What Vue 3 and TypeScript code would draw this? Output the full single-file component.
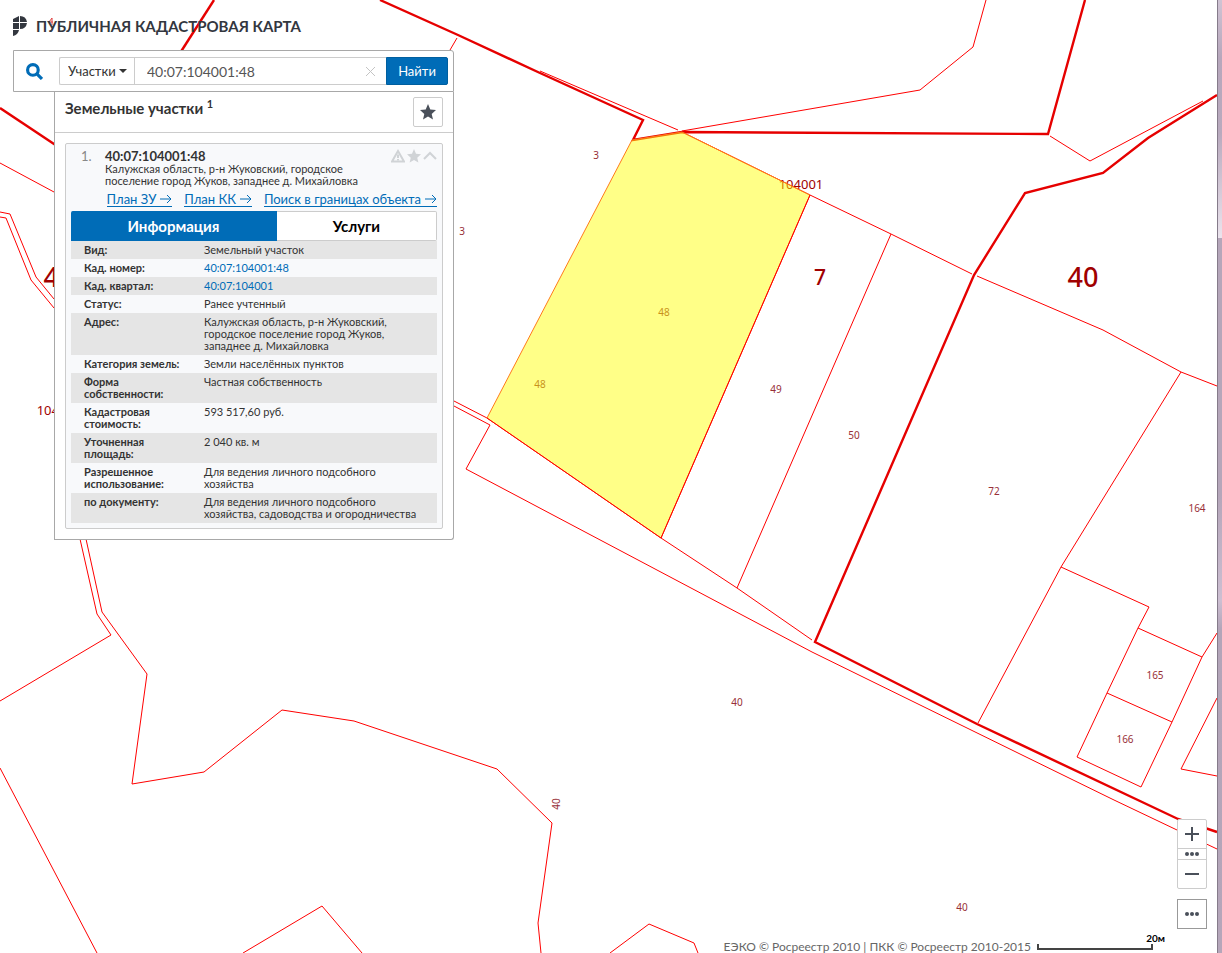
<script setup lang="ts">
import { ref } from 'vue'

interface Label { text: string; x: number; y: number; kind: 'parcel' | 'block' | 'district' | 'area'; turned?: boolean }
interface Row { name: string; value: string; link?: boolean }

const thick: string[] = [
  '214,0 182,50 150,100',
  '380,0 458,35 540,73 643,120 633,140 682,132 1048,134 1085,0',
  '1217,95 1148,138 1103,173 1025,193 974,275 815,642 977,724 1178,819 1217,832',
  '0,108 54,144 90,168',
]

const thin: string[] = [
  '457,38 450,50',
  '540,71 678,130',
  '682,131 920,90 973,47 986,0',
  '1050,136 1090,161 1203,101',
  '0,163 54,192',
  '0,212 10,214 36,277 54,299',
  '0,217 6,218 31,280 54,308',
  '682,132 810,195 891,234 972,274',
  '977,276 1103,330 1181,372 1217,386',
  '810,195 661,538',
  '891,234 737,588',
  '1181,372 1061,567 978,723',
  '1061,567 1149,607 1138,628 1202,657 1217,633',
  '1138,628 1107,693 1077,757 1141,787 1172,722 1202,657',
  '1107,693 1172,722',
  '1217,698 1181,769 1217,776',
  '454,401 487,418 661,538 737,588 812,640',
  '454,406 490,425 466,469 812,652 1020,754 1114,800 1177,830 1217,849',
  '80,539 97,614 111,635 0,701',
  '86,539 102,612 147,674 132,784 204,772 282,710 354,721 497,769 552,823 538,923 541,953',
  '0,768 97,953',
  '243,953 322,906 362,953',
  '610,953 649,924 694,943 698,953',
]

const labels: Label[] = [
  { text: '3', x: 596, y: 159, kind: 'parcel' },
  { text: '3', x: 462, y: 235, kind: 'parcel' },
  { text: '48', x: 664, y: 316, kind: 'parcel' },
  { text: '48', x: 540, y: 388, kind: 'parcel' },
  { text: '49', x: 776, y: 393, kind: 'parcel' },
  { text: '50', x: 854, y: 439, kind: 'parcel' },
  { text: '72', x: 994, y: 495, kind: 'parcel' },
  { text: '164', x: 1197, y: 512, kind: 'parcel' },
  { text: '165', x: 1155, y: 679, kind: 'parcel' },
  { text: '166', x: 1125, y: 743, kind: 'parcel' },
  { text: '40', x: 737, y: 706, kind: 'parcel' },
  { text: '40', x: 560, y: 804, kind: 'parcel', turned: true },
  { text: '40', x: 962, y: 911, kind: 'parcel' },
  { text: '104001', x: 801, y: 189, kind: 'block' },
  { text: '104001', x: 59, y: 415, kind: 'block' },
  { text: '7', x: 820, y: 285, kind: 'area' },
  { text: '40', x: 1083, y: 287, kind: 'district' },
  { text: '40', x: 59, y: 287, kind: 'district' },
]

const rows: Row[] = [
  { name: 'Вид:', value: 'Земельный участок' },
  { name: 'Кад. номер:', value: '40:07:104001:48', link: true },
  { name: 'Кад. квартал:', value: '40:07:104001', link: true },
  { name: 'Статус:', value: 'Ранее учтенный' },
  { name: 'Адрес:', value: 'Калужская область, р-н Жуковский, городское поселение город Жуков, западнее д. Михайловка' },
  { name: 'Категория земель:', value: 'Земли населённых пунктов' },
  { name: 'Форма собственности:', value: 'Частная собственность' },
  { name: 'Кадастровая стоимость:', value: '593 517,60 руб.' },
  { name: 'Уточненная площадь:', value: '2 040 кв. м' },
  { name: 'Разрешенное использование:', value: 'Для ведения личного подсобного хозяйства' },
  { name: 'по документу:', value: 'Для ведения личного подсобного хозяйства, садоводства и огородничества' },
]

const links: string[] = ['План ЗУ', 'План КК', 'Поиск в границах объекта']
const query = ref('40:07:104001:48')
const kind = ref('Участки')
const tab = ref<'info' | 'services'>('info')
</script>

<template>
  <main class="page">
    <svg class="map" viewBox="0 0 1222 953" preserveAspectRatio="xMidYMid slice" role="img" aria-label="Кадастровая карта">
      <polyline v-for="p in thin" :key="p" :points="p" class="thin" />
      <text
        v-for="(l, i) in labels" :key="i" :x="l.x" :y="l.y" :class="['label', l.kind]"
        :transform="l.turned ? `rotate(-90 ${l.x} ${l.y})` : undefined"
      >{{ l.text }}</text>
      <polyline v-for="p in thick" :key="p" :points="p" class="thick" />
      <polygon class="selected" points="632,140 682,132 810,195 661,538 487,418" />
      <polyline class="selected-edge" points="487,418 632,140 682,132 810,195" />
      <polyline class="thin" points="810,195 661,538 487,418" />
      <path class="stray" d="M52 25V18l-3 4h4" />
    </svg>

    <div class="scrollbar" />

    <div class="sidebar">
      <header class="brand">
        <svg class="logo" viewBox="0 0 14 20" aria-hidden="true">
          <path d="M0 3 6 0v6H0zM7 0q6 0 7 6H7zM0 7h6v6H0zM7 7h7q-1 6-7 6zM0 14h6q-1 5-6 6z" />
        </svg>
        <h1>ПУБЛИЧНАЯ КАДАСТРОВАЯ КАРТА</h1>
      </header>

      <form class="search" @submit.prevent>
        <svg class="lens" viewBox="0 0 16 16" aria-hidden="true">
          <circle cx="6.500" cy="6.500" r="5" /><path d="m10.500 10.500 4.500 4.500" />
        </svg>
        <div class="field">
          <label class="kind">
            <select v-model="kind" aria-label="Тип объекта">
              <option>Участки</option>
            </select>
            <svg viewBox="0 0 8 4" aria-hidden="true"><path d="M0 0h8L4 4z" /></svg>
          </label>
          <input v-model="query" type="text" aria-label="Кадастровый номер">
          <button class="clear" type="button" aria-label="Очистить" @click="query = ''">
            <svg viewBox="0 0 9 9" aria-hidden="true"><path d="m0 0 9 9M9 0 0 9" /></svg>
          </button>
        </div>
        <button class="submit" type="submit">Найти</button>
      </form>

      <section class="results">
        <div class="results-head">
          <h2>Земельные участки <sup>1</sup></h2>
          <button class="favorites" type="button" aria-label="Избранное">
            <svg viewBox="0 0 16 16" aria-hidden="true"><path d="m8 0 2.300 5.500 5.700.5-4.300 3.900L13 15.500 8 12.500 3 15.500l1.300-5.600L0 6l5.700-.5z" /></svg>
          </button>
        </div>

        <article class="card">
          <div class="summary">
            <span class="index">1.</span>
            <div class="caption">
              <h3>40:07:104001:48</h3>
              <p>Калужская область, р-н Жуковский, городское поселение город Жуков, западнее д. Михайловка</p>
            </div>
            <div class="marks">
              <button type="button" aria-label="Сообщить об ошибке">
                <svg viewBox="0 0 14 13" aria-hidden="true">
                  <path class="line" d="M7 1.500 13 12H1z" /><path class="line" d="M7 5v3.500M7 9.500V11" />
                </svg>
              </button>
              <button type="button" aria-label="В избранное">
                <svg viewBox="1 0 14 16" aria-hidden="true"><path d="m8 0 2.300 5.500 5.700.5-4.300 3.900L13 15.500 8 12.500 3 15.500l1.300-5.600L0 6l5.700-.5z" /></svg>
              </button>
              <button type="button" aria-label="Свернуть">
                <svg viewBox="0 0 14 13" aria-hidden="true"><path class="line" d="m1 9.500 6-6 6 6" /></svg>
              </button>
            </div>
          </div>

          <nav class="links">
            <a v-for="l in links" :key="l" href="#">{{ l }}
              <svg viewBox="0 0 12 10" aria-hidden="true"><path d="M0 5h11M7 1l4 4-4 4" /></svg>
            </a>
          </nav>

          <div class="tabs">
            <button type="button" :class="{ active: tab === 'info' }" @click="tab = 'info'">Информация</button>
            <button type="button" :class="{ active: tab === 'services' }" @click="tab = 'services'">Услуги</button>
          </div>

          <table>
            <tbody>
              <tr v-for="r in rows" :key="r.name">
                <th scope="row">{{ r.name }}</th>
                <td><a v-if="r.link" href="#">{{ r.value }}</a><template v-else>{{ r.value }}</template></td>
              </tr>
            </tbody>
          </table>
        </article>
      </section>
    </div>

    <div class="controls">
      <div class="zoom">
        <button type="button" aria-label="Приблизить"><svg viewBox="0 0 14 14" aria-hidden="true"><path d="M0 7h14M7 0v14" /></svg></button>
        <button class="levels" type="button" aria-label="Масштаб"><svg class="dots" viewBox="0 0 14 14" aria-hidden="true"><circle cx="2" cy="7" r="2" /><circle cx="7" cy="7" r="2" /><circle cx="12" cy="7" r="2" /></svg></button>
        <button type="button" aria-label="Отдалить"><svg viewBox="0 0 14 14" aria-hidden="true"><path d="M0 7h14" /></svg></button>
      </div>
      <button class="more" type="button" aria-label="Ещё"><svg class="dots" viewBox="0 0 14 14" aria-hidden="true"><circle cx="2" cy="7" r="2" /><circle cx="7" cy="7" r="2" /><circle cx="12" cy="7" r="2" /></svg></button>
    </div>

    <footer class="credits">
      <span>ЕЭКО © Росреестр 2010 | ПКК © Росреестр 2010-2015</span>
      <div class="scale"><span>20м</span></div>
    </footer>
  </main>
</template>

<style>
body { margin: 0; background: #fff; }
</style>

<style scoped>
.page {
  position: relative;
  box-sizing: border-box;
  min-height: 100vh;
  overflow: hidden;
  padding: 12px 13px;
  background: #fff;
  color: #333;
  font-family: Lato, "Noto Sans", sans-serif;
  font-size: 11px;
  line-height: 12px;
}
.page * { box-sizing: border-box; }
button, input, select { margin: 0; padding: 0; border: 0; background: none; color: inherit; font: inherit; }
button { display: flex; align-items: center; justify-content: center; cursor: pointer; }
h1, h2, h3, p { margin: 0; }

.map { position: absolute; inset: 0; width: 100%; height: 100%; }
.thin { fill: none; stroke: #ff0000; stroke-width: 1; }
.thick { fill: none; stroke: #e60000; stroke-width: 2.4; }
.stray { fill: none; stroke: #e04040; stroke-width: 1; }
.selected { fill: #ffff00; fill-opacity: .47; }
.selected-edge { fill: none; stroke: #ff7a1a; stroke-width: 1; }
.label { fill: #a00000; font-family: "Noto Sans", sans-serif; text-anchor: middle; }
.parcel { fill: #983038; font-size: 10px; }
.block { font-size: 13px; }
.area { font-size: 21px; font-weight: 500; }
.district { font-size: 27px; font-weight: 500; }

.scrollbar {
  position: absolute;
  top: 0;
  right: 0;
  bottom: 0;
  width: 5px;
  border-left: 1px solid #857b8a;
  background: linear-gradient(#d0c4d4 0%, #b7a7bc 6%, #b9aabe 14%, #ebe4ed 25%, #b5a6ba 25%, #b5a6ba 52%, #cdbfd2 63%, #b3a5b9 66%, #b5a6ba 100%);
}

.sidebar { position: relative; width: 441px; }
.brand { display: flex; align-items: center; gap: 9px; height: 28px; }
.logo { width: 14px; height: 20px; fill: #33373f; }
.brand h1 { color: #33373f; font-size: 15px; line-height: 20px; font-weight: 700; white-space: nowrap; }

.search {
  display: flex;
  align-items: center;
  height: 42px;
  margin-top: 10px;
  padding: 0 5px 0 12px;
  border: 1px solid #a8a8a8;
  border-radius: 0 3px 0 0;
  background: #fff;
}
.lens { width: 17px; height: 17px; margin-right: 16px; fill: none; stroke: #006cb7; stroke-width: 3; }
.field { display: flex; flex: 1; align-items: center; height: 28px; border: 1px solid #ccc; border-right: 0; border-radius: 2px 0 0 2px; }
.kind { position: relative; display: flex; align-items: center; width: 75px; height: 100%; border-right: 1px solid #ccc; }
.kind select { width: 100%; height: 100%; padding-left: 8px; appearance: none; outline: 0; font-size: 13px; }
.kind svg { position: absolute; right: 7px; width: 8px; height: 4px; fill: #333; pointer-events: none; }
.field input { flex: 1; min-width: 0; height: 100%; padding-left: 12px; outline: 0; color: #555; font-size: 14px; }
.clear { width: 31px; height: 26px; }
.clear svg { width: 9px; height: 9px; stroke: #c4c4c4; stroke-width: 1; }
.submit { width: 62px; height: 28px; border: 1px solid #005f9f; border-radius: 0 2px 2px 0; background: #006cb7; color: #fff; font-size: 13px; }

.results { margin-left: 41px; padding-bottom: 10px; border: 1px solid #a8a8a8; border-top: 0; border-radius: 0 0 3px 0; background: #fff; }
.results-head { display: flex; align-items: center; justify-content: space-between; height: 41px; padding: 0 10px; border-bottom: 1px solid #ccc; }
.results-head h2 { color: #333; font-size: 15px; line-height: 20px; font-weight: 700; padding-bottom: 8px; }
.results-head sup { font-size: 11px; line-height: 0; }
.favorites { width: 30px; height: 30px; border: 1px solid #ccc; border-radius: 2px; background: #fff; }
.favorites svg { width: 16px; height: 16px; fill: #4a505a; }

.card { margin: 10px 10px 0; padding: 5px; border: 1px solid #ccc; border-radius: 2px; background: #f8f9fb; }
.summary { display: flex; align-items: flex-start; height: 42px; }
.index { width: 34px; padding-left: 10px; color: #888; font-size: 13px; line-height: 14px; }
.caption { flex: 1; min-width: 0; }
.caption h3 { font-size: 13px; line-height: 14px; font-weight: 700; }
.marks { display: flex; gap: 2px; flex: none; margin-left: 18px; }
.marks svg { width: 14px; height: 14px; fill: #d0d3d6; }
.marks .line { fill: none; stroke: #d0d3d6; stroke-width: 2; }

.links { display: flex; justify-content: flex-end; gap: 12px; height: 20px; }
.links a { display: flex; align-items: center; gap: 4px; height: 16px; border-bottom: 1px solid #006cb7; color: #006cb7; font-size: 13px; text-decoration: none; white-space: nowrap; }
.links svg { width: 12px; height: 10px; fill: none; stroke: #006cb7; stroke-width: 1; }

.tabs { display: flex; height: 30px; }
.tabs button { flex: 160; border: 1px solid #ccc; border-left: 0; border-radius: 0 2px 2px 0; background: #fff; color: #000; font-size: 15px; font-weight: 700; }
.tabs button:first-child { flex: 206; border-radius: 2px 0 0 0; }
.tabs .active { border-color: #006cb7; background: #006cb7; color: #fff; }

table { width: 100%; border-collapse: collapse; table-layout: fixed; }
tr:nth-child(odd) { background: #e5e5e5; }
th, td { padding: 3px 0; text-align: left; vertical-align: top; }
th { width: 133px; padding-left: 13px; padding-right: 20px; font-weight: 700; }
td { padding-right: 15px; }
td a { color: #006cb7; text-decoration: none; }

.controls { position: absolute; right: 15px; bottom: 24px; display: flex; flex-direction: column; gap: 10px; }
.zoom { width: 30px; border: 1px solid #ccc; border-radius: 2px; background: #fff; }
.zoom button { width: 28px; height: 28px; }
.zoom .levels { height: 12px; border: solid #ccc; border-width: 1px 0; }
.controls svg { width: 14px; height: 14px; stroke: #4a505a; stroke-width: 2; }
.controls .dots { stroke: none; fill: #4a505a; }
.more { width: 30px; height: 30px; border: 1px solid #999; background: #fff; }

.credits { position: absolute; right: 69px; bottom: 0; display: flex; align-items: center; gap: 6px; height: 12px; color: #666; font-size: 12px; }
.scale { position: relative; width: 116px; height: 6px; border: 2px solid #444; border-top: 0; }
.scale span { position: absolute; right: -14px; bottom: 4px; color: #000; font-size: 10px; font-weight: 700; }
</style>
